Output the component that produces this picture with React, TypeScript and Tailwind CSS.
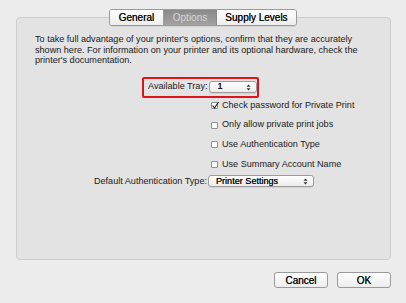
import React from "react";

const font = { fontFamily: '"Liberation Sans", Arial, sans-serif' };

function Arrows() {
  return (
    <svg width="5" height="7" viewBox="0 0 5 7" className="block">
      <path d="M2.5 0.5 L4.5 2.8 L0.5 2.8 Z" fill="#333" />
      <path d="M2.5 6.5 L4.5 4.2 L0.5 4.2 Z" fill="#333" />
    </svg>
  );
}

function Popup({ label, width }: { label: string; width: string }) {
  return (
    <div
      className={`${width} h-[12px] flex items-center justify-between pl-[7px] pr-[5px] rounded-[3px] border border-[#9c9c9c] bg-gradient-to-b from-[#ffffff] to-[#ececec] shadow-[0_1px_0_rgba(0,0,0,0.08)]`}
    >
      <span className="text-[9.1px] leading-none text-[#111] [text-shadow:0_0_0.2px_#111]">{label}</span>
      <Arrows />
    </div>
  );
}

function Check({ checked, label }: { checked?: boolean; label: string }) {
  return (
    <div className="h-[19.7px] flex items-center gap-[4px]">
      <div className="w-[7px] h-[7px] rounded-[1px] border border-[#8f8f8f] bg-white relative">
        {checked && (
          <svg width="9" height="9" viewBox="0 0 9 9" className="absolute left-[-1px] top-[-2px]">
            <path d="M1.5 4.5 L3.5 7 L7.5 1" stroke="#222" strokeWidth="1.2" fill="none" />
          </svg>
        )}
      </div>
      <span className="text-[9.1px] leading-none text-[#1a1a1a]">{label}</span>
    </div>
  );
}

export default function App() {
  return (
    <div className="w-[406px] h-[303px] bg-[#ececec] relative overflow-hidden" style={font}>
      <div className="absolute left-[16px] top-[17px] w-[375px] h-[243px] rounded-[4px] border border-[#cdcdcd] bg-[#e3e3e3] flex flex-col">
        <div className="pl-[18px] pt-[16px] text-[9.1px] leading-[10.5px] text-[#1a1a1a] whitespace-nowrap">
          <div>To take full advantage of your printer's options, confirm that they are accurately</div>
          <div>shown here. For information on your printer and its optional hardware, check the</div>
          <div>printer's documentation.</div>
        </div>
        <div className="ml-[125px] mt-[11px] w-[117px] h-[21px] rounded-[2px] border-2 border-[#e0141b] flex items-center pl-[4px] gap-[2px]">
          <span className="text-[9.1px] leading-none text-[#1a1a1a] whitespace-nowrap">Available Tray:</span>
          <Popup label="1" width="w-[48px]" />
        </div>
        <div className="ml-[194px] mt-[-2px] flex flex-col">
          <Check checked label="Check password for Private Print" />
          <Check label="Only allow private print jobs" />
          <Check label="Use Authentication Type" />
          <Check label="Use Summary Account Name" />
        </div>
        <div className="mt-[-3px] h-[20px] flex items-center">
          <div className="w-[191px] text-right pr-[1px] text-[9.1px] leading-none text-[#1a1a1a]">Default Authentication Type:</div>
          <Popup label="Printer Settings" width="w-[106px]" />
        </div>
      </div>
      <div className="absolute left-[109px] top-[9px] h-[17px] flex rounded-[3px] border border-[#9a9a9a] overflow-hidden shadow-[0_1px_0_rgba(0,0,0,0.06)]">
        <div className="w-[54px] flex items-center justify-center bg-gradient-to-b from-[#ffffff] to-[#ededed] text-[10px] text-[#111] [text-shadow:0_0_0.3px_#111] border-r border-[#9a9a9a]">General</div>
        <div className="w-[53px] flex items-center justify-center bg-gradient-to-b from-[#8a8a8a] to-[#a2a2a2] text-[10px] text-[#d6d6d6] border-r border-[#8a8a8a]">Options</div>
        <div className="w-[79px] flex items-center justify-center bg-gradient-to-b from-[#ffffff] to-[#ededed] text-[10px] text-[#111] [text-shadow:0_0_0.3px_#111]">Supply Levels</div>
      </div>
      <div className="absolute left-[274px] top-[272px] flex gap-[9px]">
        <div className="w-[54px] h-[16px] rounded-[3px] border border-[#9a9a9a] bg-gradient-to-b from-[#ffffff] to-[#ececec] flex items-center justify-center text-[10px] text-[#111] [text-shadow:0_0_0.3px_#111]">Cancel</div>
        <div className="w-[54px] h-[16px] rounded-[3px] border border-[#9a9a9a] bg-gradient-to-b from-[#ffffff] to-[#ececec] flex items-center justify-center text-[10px] text-[#111] [text-shadow:0_0_0.3px_#111]">OK</div>
      </div>
    </div>
  );
}
